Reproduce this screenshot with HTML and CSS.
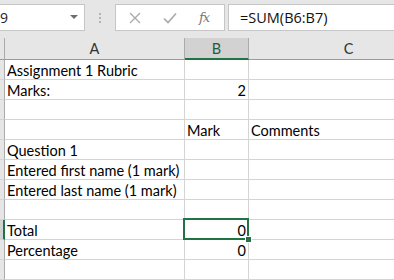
FILE: index.html
```html
<!DOCTYPE html>
<html>
<head>
<meta charset="utf-8">
<link rel="stylesheet" href="styles.css">
</head>
<body>
<div class="app">
  <div class="fbar">
    <div class="namebox"><span class="nbtext">B9</span><span class="caret"></span></div>
    <div class="dots"><i></i><i></i><i></i></div>
    <div class="fbtns">
      <svg class="ico" width="12" height="12" viewBox="0 0 12 12"><path d="M1 1 L11 11 M11 1 L1 11" stroke="#a8a8a8" stroke-width="1.3" fill="none"/></svg>
      <svg class="ico chk" width="14" height="12" viewBox="0 0 14 12"><path d="M1 6.5 L5 10.5 L13 1.5" stroke="#a8a8a8" stroke-width="1.6" fill="none"/></svg>
      <span class="fx">fx</span>
    </div>
    <div class="finput">=SUM(B6:B7)</div>
  </div>
  <div class="sheet">
    <div class="rh corner"></div><div class="ch">A</div><div class="ch sel">B</div><div class="ch">C</div>

    <div class="rh"></div><div class="c">Assignment 1 Rubric</div><div class="c"></div><div class="c"></div>
    <div class="rh"></div><div class="c">Marks:</div><div class="c num">2</div><div class="c"></div>
    <div class="rh"></div><div class="c"></div><div class="c"></div><div class="c"></div>
    <div class="rh"></div><div class="c"></div><div class="c">Mark</div><div class="c">Comments</div>
    <div class="rh"></div><div class="c">Question 1</div><div class="c"></div><div class="c"></div>
    <div class="rh"></div><div class="c">Entered first name (1 mark)</div><div class="c"></div><div class="c"></div>
    <div class="rh"></div><div class="c">Entered last name (1 mark)</div><div class="c"></div><div class="c"></div>
    <div class="rh"></div><div class="c"></div><div class="c"></div><div class="c"></div>
    <div class="rh rsel"></div><div class="c">Total</div><div class="c num active">0<span class="selbox"><span class="handle"></span></span></div><div class="c"></div>
    <div class="rh"></div><div class="c">Percentage</div><div class="c num">0</div><div class="c"></div>
    <div class="rh"></div><div class="c"></div><div class="c"></div><div class="c"></div>
  </div>
</div>
</body>
</html>
```

FILE: styles.css
```css
html, body {
  margin: 0;
  padding: 0;
}
body {
  width: 394px;
  height: 280px;
  overflow: hidden;
  background: #e6e6e6;
  font-family: Lato, "Open Sans", sans-serif;
}
.app {
  width: 394px;
  height: 280px;
  overflow: hidden;
}
.fbar {
  height: 38px;
  box-sizing: border-box;
  padding-top: 4px;
  display: flex;
  align-items: flex-start;
  background: #e6e6e6;
}
.namebox {
  margin-left: -1px;
  width: 86px;
  height: 27px;
  box-sizing: border-box;
  background: #fff;
  border: 1px solid #c6c6c6;
  display: flex;
  align-items: center;
  overflow: hidden;
  font-family: "Open Sans", sans-serif;
  font-size: 14px;
  color: #222;
}
.nbtext {
  margin-left: -9px;
  flex: 1;
}
.caret {
  width: 0;
  height: 0;
  border-left: 4px solid transparent;
  border-right: 4px solid transparent;
  border-top: 4px solid #6e6e6e;
  margin-right: 6px;
  margin-top: -2px;
}
.dots {
  width: 30px;
  height: 27px;
  display: flex;
  flex-direction: column;
  align-items: center;
  justify-content: center;
  gap: 2px;
}
.dots i {
  display: block;
  width: 2px;
  height: 2px;
  background: #b4b4b4;
}
.fbtns {
  width: 110px;
  height: 27px;
  box-sizing: border-box;
  background: #fff;
  border: 1px solid #c6c6c6;
  display: flex;
  align-items: center;
  padding-left: 13px;
}
.ico { display: block; }
.chk { margin-left: 22px; }
.fx {
  margin-left: 22px;
  font-family: "DejaVu Serif", "Liberation Serif", serif;
  font-style: italic;
  font-size: 13px;
  color: #777;
  letter-spacing: -1px;
}
.finput {
  margin-left: 3px;
  flex: 1;
  height: 27px;
  box-sizing: border-box;
  background: #fff;
  border: 1px solid #c6c6c6;
  border-right: none;
  padding-left: 11px;
  font-family: "Open Sans", sans-serif;
  font-size: 14.5px;
  line-height: 25px;
  color: #111;
}
.sheet {
  display: grid;
  grid-template-columns: 5px 180px 64px 200px;
  grid-template-rows: 22px repeat(11, 20px);
  background: #fff;
  font-size: 14.5px;
}
.rh {
  background: #e6e6e6;
  border-right: 1px solid #ababab;
  border-bottom: 1px solid #d4d4d4;
  box-sizing: border-box;
}
.rh.corner {
  border-bottom: 1px solid #9b9b9b;
}
.rh.rsel {
  background: #d2d2d2;
  border-right: 2px solid #217346;
}
.ch {
  background: #e6e6e6;
  border-right: 1px solid #ababab;
  border-bottom: 1px solid #9b9b9b;
  box-sizing: border-box;
  text-align: center;
  color: #333;
  line-height: 21px;
  font-size: 14.5px;
}
.ch.sel {
  background: #d2d2d2;
  border-bottom: 2px solid #217346;
  color: #1f5c3a;
}
.c {
  border-right: 1px solid #d4d4d4;
  border-bottom: 1px solid #d4d4d4;
  box-sizing: border-box;
  padding: 0 2px;
  line-height: 21px;
  white-space: nowrap;
  color: #000;
}
.c.num { text-align: right; }
.active { position: relative; }
.selbox {
  position: absolute;
  left: -2px;
  top: -2px;
  width: 66px;
  height: 22px;
  box-sizing: border-box;
  border: 2px solid #217346;
}
.handle {
  position: absolute;
  right: -5px;
  bottom: -5px;
  width: 5px;
  height: 5px;
  background: #217346;
  border: 1px solid #fff;
}
```
